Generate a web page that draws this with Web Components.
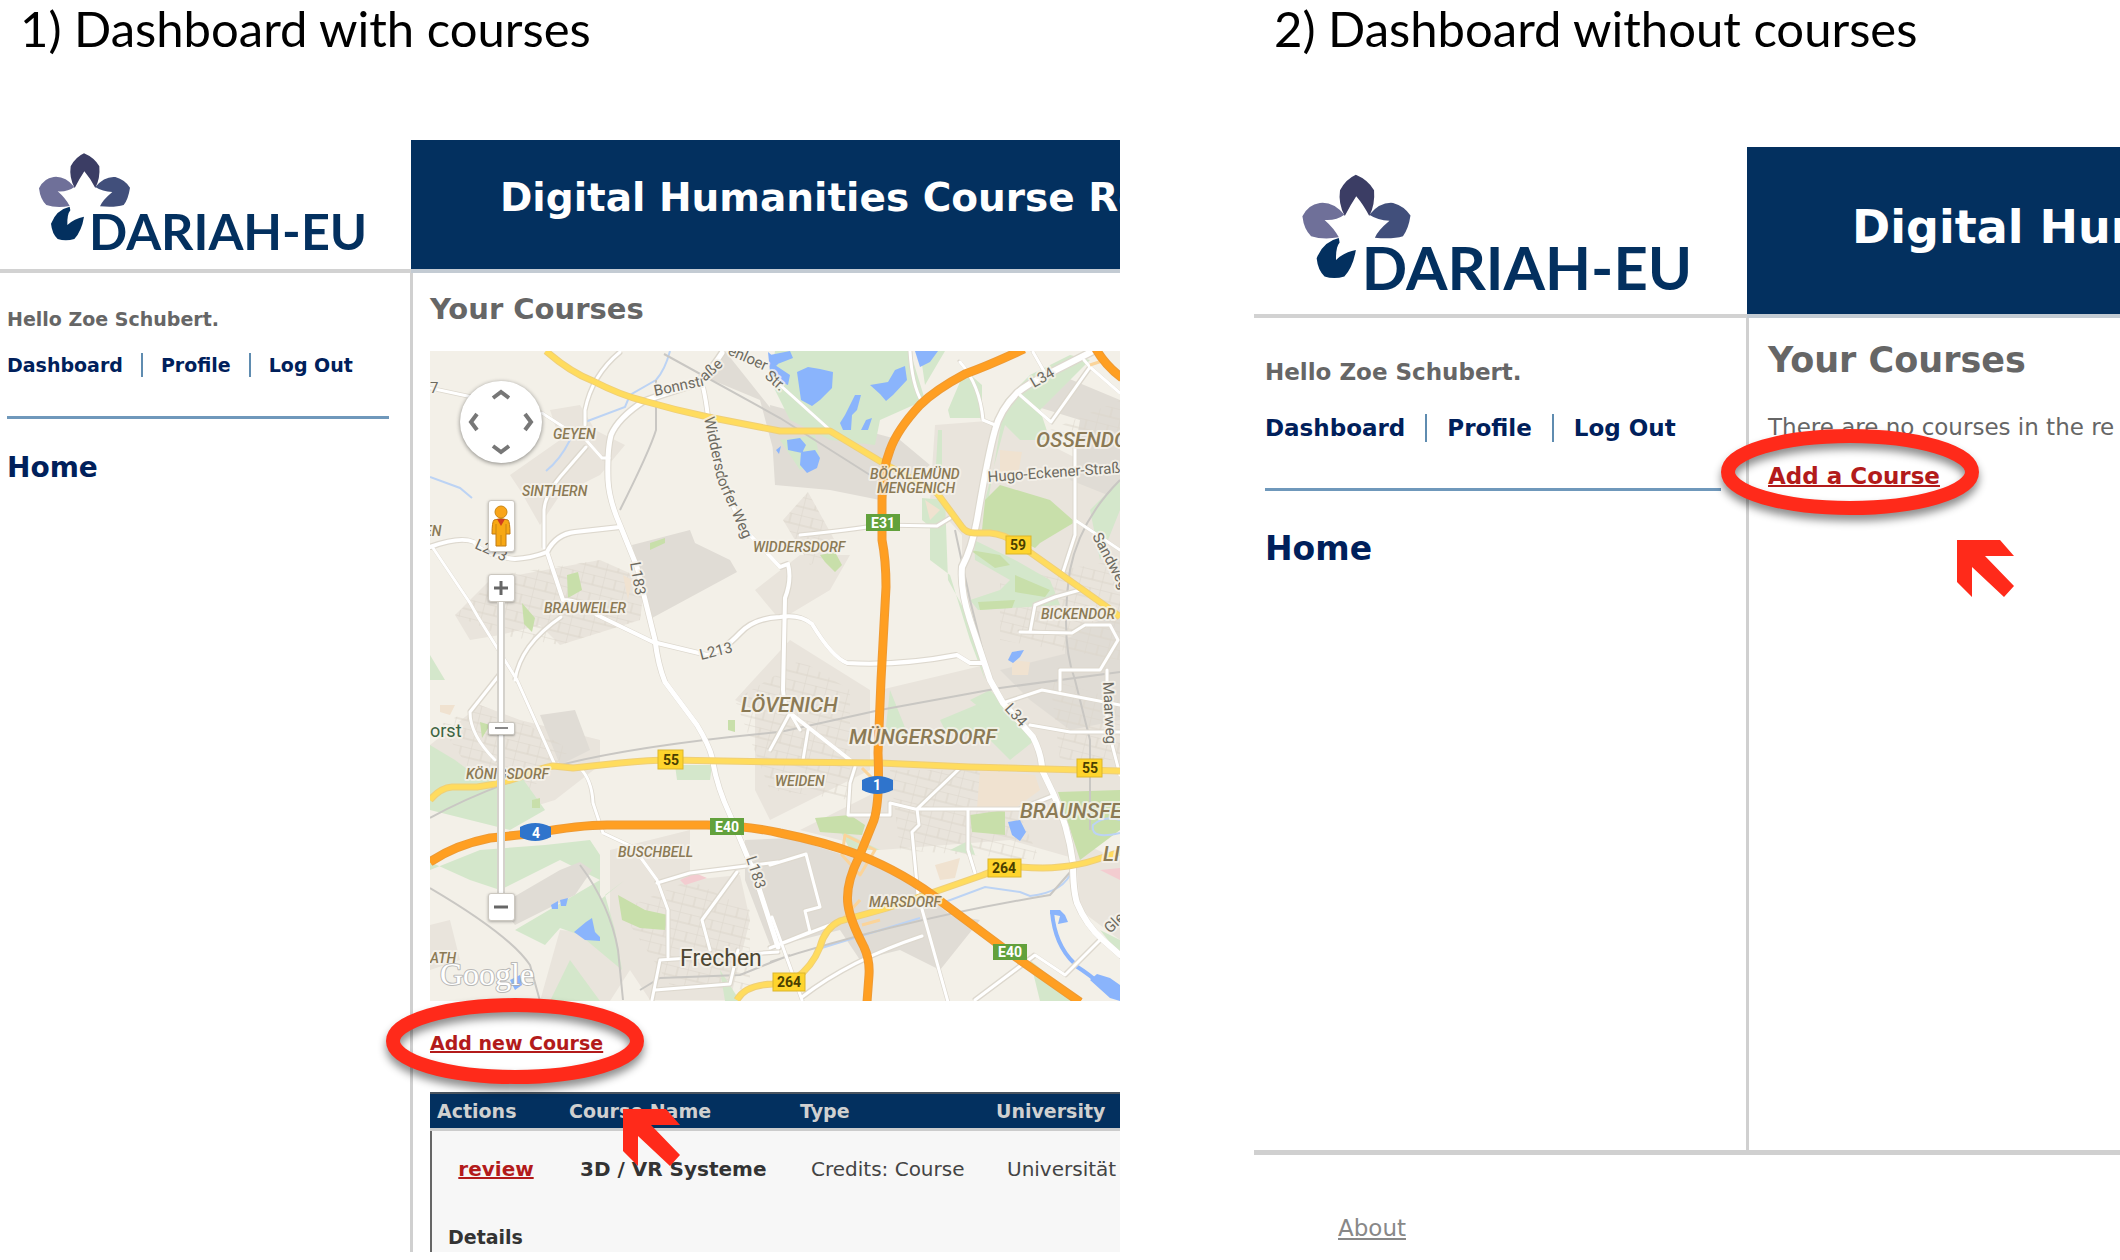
<!DOCTYPE html>
<html lang="en">
<head>
<meta charset="utf-8">
<title>Dashboard states</title>
<style>
  body { margin: 0; background: #fff; font-family: "DejaVu Sans", Verdana, sans-serif; }
</style>
</head>
<body>
<dashboard-board></dashboard-board>

<script>
const define = (name, html) => {
  const template = document.createElement('template');
  template.innerHTML = html;
  customElements.define(name, class extends HTMLElement {
    constructor() {
      super();
      this.attachShadow({ mode: 'open' }).append(template.content.cloneNode(true));
    }
  });
};

define('slide-caption', `
<style>
  :host { display: block; box-sizing: border-box; padding: 0 20px; overflow: hidden; }
  h1 { margin: 0; font: 400 49px/56px Lato, sans-serif; color: #000; white-space: nowrap; }
</style>
<h1><slot></slot></h1>`);

define('dariah-logo', `
<style>
  :host { display: block; }
  svg { display: block; width: 100%; }
  text { font: 700 151px Lato, sans-serif; fill: #03305f; }
</style>
<svg viewBox="110 60 990 310" role="img" aria-label="DARIAH-EU">
  <path fill="#3b3d64" d="M251 67Q282 80 297 106Q300 142 285 171Q270 142 252 121Q238 142 223 171Q206 140 211 106Q226 78 251 67Z"/>
  <path fill="#6f7099" d="M222 168Q194 134 160 138Q130 142 116 172Q120 206 138 222Q168 232 208 225Q196 202 172 181Q202 183 222 168Z"/>
  <path fill="#414f7b" d="M285 168Q312 135 345 138Q374 146 389 170Q384 204 370 222Q345 230 299 226Q306 208 336 183Q306 182 285 168Z"/>
  <path fill="#03305f" d="M208 227Q168 236 152 278Q155 308 172 324Q196 332 222 324Q244 300 251 257Q222 262 201 282Q200 250 210 238Z"/>
  <text x="266" y="357">DARIAH-EU</text>
</svg>`);

define('user-menu', `
<style>
  :host { display: block; color: #00205b; font-weight: 700; }
  p { margin: 0; color: #666; font-size: var(--menu-size); line-height: var(--menu-line); }
  nav { display: flex; margin-top: var(--nav-gap); font-size: var(--menu-size); line-height: var(--menu-line); white-space: nowrap; }
  a { color: inherit; text-decoration: none; }
  nav a + a { margin-left: var(--link-gap); padding-left: var(--link-gap); border-left: 2px solid #5f8cb0; }
  hr { height: 3px; margin: var(--rule-gap) 0 var(--home-gap); border: 0; background: #6f98bb; }
  .home { display: block; font-size: var(--home-size); line-height: 34px; }
</style>
<p>Hello Zoe Schubert.</p>
<nav><a href="#dashboard">Dashboard</a><a href="#profile">Profile</a><a href="#logout">Log Out</a></nav>
<hr>
<a class="home" href="#home">Home</a>`);

define('site-panel', `
<style>
  :host { display: grid; grid-template: var(--head) 1fr / var(--side) minmax(0, 1fr); overflow: hidden; }
  .logo { border-bottom: 4px solid #d2d2d2; padding: var(--logo-pad); }
  dariah-logo { width: var(--logo-width); }
  .banner { margin-left: -2px; background: #03305f; border-bottom: 4px solid #c3cbd3; color: #fff; overflow: hidden; }
  h2 { margin: 0; padding: var(--title-pad); font-size: var(--title-size); line-height: 56px; white-space: nowrap; }
  aside { border-right: 3px solid #d0d0d0; padding: var(--side-pad); }
  main { min-width: 0; padding: var(--main-pad); }
  h3 { margin: 0; font-size: var(--heading-size); line-height: var(--heading-line); color: #666; white-space: nowrap; }
</style>
<div class="logo"><dariah-logo></dariah-logo></div>
<div class="banner"><h2><slot name="title"></slot></h2></div>
<aside><user-menu></user-menu></aside>
<main><h3>Your Courses</h3><slot></slot></main>`);

define('marked-link', `
<style>
  :host { display: block; position: relative; width: max-content; font-weight: 700; }
  a { color: #b31b1b; text-decoration: underline; text-decoration-thickness: 2px; white-space: nowrap; }
  svg { position: absolute; overflow: visible; pointer-events: none; z-index: 2; }
  .ring { width: 258px; height: 86px; left: var(--ring-left); top: -33px; filter: drop-shadow(0 6px 4px rgba(0,0,0,.45)); }
  .arrow { width: 58px; height: 58px; left: var(--arrow-left); top: 78px; }
</style>
<a href="#add"><slot></slot></a>
<svg class="ring" viewBox="0 0 258 86" aria-hidden="true"><ellipse cx="129" cy="43" rx="122" ry="36" fill="none" stroke="#ff2a1a" stroke-width="14"/></svg>
<svg class="arrow" viewBox="0 0 58 58" aria-hidden="true"><path fill="#ff2a1a" d="M0 0H43L57 16H28L57 46L47 57L15 27V57L0 42Z"/></svg>`);

define('course-table', `
<style>
  :host { display: block; overflow: hidden; }
  table { width: 100%; table-layout: fixed; border-collapse: separate; border-spacing: 0; font-size: 20px; line-height: 24px; color: #444; white-space: nowrap; background: #f7f7f7; }
  th { background: #03305f; color: #d0d0d0; text-align: left; font-size: 19px; padding: 5px 7px; border-top: 2px solid #4b5560; border-bottom: 3px solid #ccc; }
  td { padding: 26px 0 34px 18px; }
  td:first-child { box-shadow: inset 2px 0 #666; }
  .act { padding-left: 0; text-align: center; }
  .more td { padding: 10px 0 3px 18px; font-size: 19px; }
  b { color: #333; }
  a { color: #b31b1b; font-weight: 700; text-decoration-thickness: 2px; }
</style>
<table>
  <colgroup><col style="width:132px"><col style="width:231px"><col style="width:196px"><col></colgroup>
  <thead><tr><th>Actions</th><th>Course Name</th><th>Type</th><th>University</th></tr></thead>
  <tbody>
    <tr><td class="act"><a href="#review">review</a></td><td><b>3D / VR Systeme</b></td><td>Credits: Course</td><td>Universität</td></tr>
    <tr class="more"><td colspan="4"><b>Details</b></td></tr>
  </tbody>
</table>`);

define('map-controls', `
<style>
  :host { display: flex; flex-direction: column; align-items: center; width: 82px; }
  button { box-sizing: border-box; width: 27px; height: 28px; padding: 0; border: 1px solid #ccc8c0; border-radius: 3px; background: #fff; box-shadow: 0 1px 3px rgba(0,0,0,.3); display: grid; place-items: center; }
  button svg { display: block; }
  .pan { width: 82px; height: 82px; border-radius: 50%; background: #fff; box-shadow: 0 1px 4px rgba(0,0,0,.45); display: grid; grid-template: repeat(3, 1fr) / repeat(3, 1fr); place-items: center; }
  .pan button { width: 24px; height: 24px; border: 0; background: none; box-shadow: none; }
  .n { grid-area: 1/2; } .w { grid-area: 2/1; } .e { grid-area: 2/3; } .s { grid-area: 3/2; }
  .n svg { transform: rotate(90deg); } .e svg { transform: rotate(180deg); } .s svg { transform: rotate(-90deg); }
  .peg { height: 52px; margin: 37px 0 22px; }
  input { appearance: none; writing-mode: vertical-lr; width: 28px; height: 291px; margin: 0; background: linear-gradient(90deg, transparent 10px, #d5d2cc 10px 12px, #fff 12px 16px, #d5d2cc 16px 18px, transparent 18px); }
  input::-webkit-slider-thumb { appearance: none; box-sizing: border-box; width: 27px; height: 13px; border: 1px solid #c8c5be; border-radius: 2px; background: linear-gradient(#888, #888) center / 13px 2px no-repeat #fff; box-shadow: 0 1px 2px rgba(0,0,0,.3); }
</style>
<div class="pan">
  <button class="n" aria-label="Pan up"><svg width="12" height="20" viewBox="0 0 12 20"><path d="M9 2L3 10L9 18" fill="none" stroke="#777" stroke-width="4"/></svg></button>
  <button class="w" aria-label="Pan left"><svg width="12" height="20" viewBox="0 0 12 20"><path d="M9 2L3 10L9 18" fill="none" stroke="#777" stroke-width="4"/></svg></button>
  <button class="e" aria-label="Pan right"><svg width="12" height="20" viewBox="0 0 12 20"><path d="M9 2L3 10L9 18" fill="none" stroke="#777" stroke-width="4"/></svg></button>
  <button class="s" aria-label="Pan down"><svg width="12" height="20" viewBox="0 0 12 20"><path d="M9 2L3 10L9 18" fill="none" stroke="#777" stroke-width="4"/></svg></button>
</div>
<button class="peg" aria-label="Street View"><svg width="20" height="44" viewBox="0 0 20 44"><path d="M3 16Q10 13 17 16Q19 18 19 30H15V42H5V30H1Q1 18 3 16Z" fill="#f7a814" stroke="#c07a14"/><path d="M6 15H14L10 22Z" fill="#d03c20"/><circle cx="10" cy="8" r="6" fill="#f9a51a" stroke="#c98612"/><path d="M5 30V20M15 30V20M10 31V41" stroke="#c98612"/></svg></button>
<button aria-label="Zoom in"><svg width="14" height="14" viewBox="0 0 14 14"><path d="M7 0V14M0 7H14" stroke="#666" stroke-width="3"/></svg></button>
<input type="range" min="0" max="100" value="43" aria-label="Zoom level">
<button aria-label="Zoom out"><svg width="14" height="14" viewBox="0 0 14 14"><path d="M0 7H14" stroke="#666" stroke-width="3"/></svg></button>`);

define('course-map', `
<style>
  :host { display: block; position: relative; overflow: hidden; background: #f3f0e8; }
  .map { display: block; width: 100%; height: 650px; }
  map-controls { position: absolute; left: 30px; top: 30px; }
  text { font-family: Roboto, sans-serif; paint-order: stroke; stroke: #f6f3ec; stroke-width: 4px; stroke-opacity: .8; stroke-linejoin: round; }
  .town { font-style: italic; font-size: 14px; fill: #8b7a55; font-weight: 500; }
  .big { font-size: 21px; }
  .road { font-size: 15px; fill: #6d6a60; }
  .city { font-size: 23px; fill: #4c4633; }
  .badge text { stroke: none; font-size: 14px; font-weight: 700; text-anchor: middle; fill: #4a3f00; }
  .badge .w { fill: #fff; }
</style>
<svg class="map" viewBox="430 351 690 650" preserveAspectRatio="xMinYMin slice" role="img" aria-label="Map of courses west of Cologne">
  <defs>
    <pattern id="streets" width="22" height="18" patternUnits="userSpaceOnUse" patternTransform="rotate(14)"><path d="M0 0H22M0 0V18M12 0V10M0 10H22" stroke="#dcd6cb" fill="none"/></pattern>
    <g id="white">
      <path d="M722 353Q706 378 690 386Q664 394 644 401Q618 418 611 435Q607 450 608 480Q609 500 620 525L637 567L655 640Q658 665 665 682Q682 705 697 725Q709 745 712 757Q716 785 730 815L753 870L778 947" stroke-width="5"/>
      <path d="M703 387Q706 400 708 417L720 473Q732 510 748 533L780 567L788 564Q792 580 785 598L783 690Q784 707 790 713L850 760" stroke-width="4"/>
      <path d="M430 547Q460 536 474 542Q484 556 515 559Q532 558 547 552Q556 534 575 532L620 527M547 552L563 600Q582 600 597 615L653 642L707 655Q722 652 740 633Q754 618 780 617Q800 614 812 624Q832 657 847 663Q900 666 957 655L970 663H983" stroke-width="4"/>
      <path d="M433 548L470 603L478 617L517 680L555 765L580 768Q592 780 593 803L603 833L633 847L657 880L668 910V957" stroke-width="3"/>
      <path d="M1093 351L1050 373Q1026 385 1017 393Q1000 410 995 430Q988 455 977 520Q972 548 962 567Q960 590 970 620L990 680L1003 703L1033 737Q1042 755 1042 770L1053 793Q1068 825 1073 863Q1073 890 1077 903Q1086 925 1103 940L1120 955" stroke-width="6"/>
      <path d="M910 351Q912 385 922 402M960 362Q980 385 983 420L995 425M1033 352L1045 373M1020 395L1051 422L1090 367L1084 360M1090 367L1120 393M770 376L830 430M1075 440V535L1063 572M1075 520L1120 550" stroke-width="3"/>
      <path d="M620 352Q592 375 585 410V425M542 413L565 428M586 440L602 458H609M586 447L560 477Q545 495 544 510V548M430 388L472 397M561 617Q520 645 515 680M500 674L470 712Q470 735 495 760" stroke-width="3"/>
      <path d="M1003 703L1042 690L1120 705M1030 725L1070 732H1120M1107 670V725L1120 775M916 809H1020L1055 795M960 768L917 809L919 825L912 832L918 895L948 1002M968 810V850L975 873M855 767L850 783L848 815H890V803L915 809" stroke-width="3"/>
      <path d="M657 883L690 873L778 862M737 872L702 920L710 950M652 1000L660 960L778 952M655 990L730 984L738 950M770 865L806 854L820 907L805 911L810 932L770 948L830 925M772 917L802 1000M802 997Q850 960 922 936M975 1000L1035 955L1050 965L1065 975L1100 940" stroke-width="3"/>
      <path d="M800 730L790 713L770 750M808 730L803 760M1020 632L1072 633L1085 625H1110L1118 640L1100 670H1060V690M1035 605L1030 632M1035 605L1055 597L1080 590M800 535Q850 530 880 525L937 526L950 518" stroke-width="3"/>
    </g>
    <g id="yellow"><path d="M546 351Q570 372 593 381Q620 395 644 401Q675 410 708 417L780 431H830L883 463L937 493L962 527Q966 533 975 533H990Q1003 534 1017 543L1107 607L1120 617"/><path d="M430 800Q440 788 452 787H477Q500 784 520 777Q540 768 553 766L573 768L620 763Q650 760 670 760L780 762L880 763L970 767L1120 771"/><path d="M737 1000Q745 985 773 984L795 979Q812 967 820 947Q825 928 840 921Q870 913 887 908L937 891L983 875Q1000 867 1020 867Q1045 869 1060 867Q1080 865 1095 860L1120 852"/></g>
    <g id="orange"><path d="M1024 349Q990 365 965 374Q935 390 920 405Q897 430 890 450Q882 470 882 500V540Q886 560 886 587L881 680L878 753Q880 800 874 820L859 857Q845 885 848 905Q850 920 864 947Q870 960 869 975L867 1002"/><path d="M430 862Q455 845 490 838Q520 835 535 833Q580 825 607 825H707Q750 826 780 833Q825 842 859 855Q905 873 943 903L1010 953L1080 1002"/><path d="M1096 349Q1105 365 1122 378"/></g>
  </defs>
  <g fill="#e9e4dc">
    <path d="M510 475L560 440L550 410L580 405L595 430L625 445L600 475L560 495L540 525L520 490ZM455 615L490 580L600 560L645 580L640 620L560 645L540 625L500 635L470 640ZM755 590L800 555L850 555L830 590L780 620ZM783 520L808 492L840 550L810 565Z"/>
    <path d="M935 425L1000 420L1120 480V620L1070 670H985L962 590V535L930 500ZM430 745L480 705L520 720L600 740V765L555 800L490 820L470 800L430 795ZM735 700L790 640L870 690V770L770 820L755 790V710ZM880 690L985 665L1120 680V800L1080 860L1010 840L880 850L800 830L880 790Z"/>
    <path d="M610 850L690 830L690 880L740 875L750 920L730 1000H650L610 940ZM430 925L450 920L460 960L430 970ZM1075 840L1120 860V940L1080 910ZM560 930L620 935L630 970L610 1001H540Z"/>
  </g>
  <g fill="#e0dcd5">
    <path d="M632 545L690 530L695 543L730 560L737 572L652 618L640 580ZM725 351L780 420V475L760 400L700 375ZM770 405L900 440L930 465L880 500L830 490L775 485ZM1015 400L1060 375L1120 400V500L1070 480L1080 420ZM745 840L790 838L860 860L910 880L950 915L980 920L940 970L900 950L860 960L840 930L800 940L770 945L745 880ZM1000 670L1120 640V720L1070 730L1030 700ZM540 715L575 710L590 750L560 765ZM1100 620L1120 610V660L1065 660V640Z"/>
  </g>
  <path fill="url(#streets)" d="M455 615L500 575L600 560L645 580L640 620L560 645L500 635ZM783 520L808 492L840 550L810 565ZM1000 580L1120 560V660L1000 640ZM890 770H1000L1040 860L900 850ZM620 910L690 880L750 910V990L670 985ZM440 725L480 705L520 720L570 750L530 790L470 770ZM735 700L800 660L850 690V800L770 790ZM1050 430L1120 400V440H1070ZM1050 680L1120 700V760H1060Z"/>
  <g fill="#d4e7cb">
    <path d="M430 655L445 680H430ZM430 745L455 760L475 775L520 775L545 810L510 830L430 810ZM430 870L480 850L545 845L590 840L600 855L600 900L625 880L605 895L615 930L622 970L580 935L560 928L545 945L515 930L600 880L560 860L500 890L470 880L430 862Z"/>
    <path d="M775 351H850L910 351L925 400L880 420L875 445L830 440L790 420L770 380ZM920 351H945L925 385ZM948 410L965 370L982 385L982 418L950 418ZM1005 400L1030 375L1070 355L1090 360L1040 410L1050 440L1020 440L1005 425L985 500V520ZM780 440L815 435L820 460L800 470ZM1090 510L1120 480V510L1100 560ZM930 500L945 498L948 580L970 620L985 680L970 640L950 575L930 560ZM940 720L1000 695L1035 740L1010 760L990 740L945 730ZM675 765H712L710 780H677ZM970 840L950 850L975 855ZM1030 960L1080 1001H1040ZM840 830L880 850L850 850ZM570 960L600 1001H550ZM720 970L740 1001H725ZM1100 930L1120 940V955ZM890 690L910 740L885 735Z"/>
    <path d="M922 498L945 500L940 535L922 520ZM974 540L1015 560L1050 580L1060 605L978 610L970 600L1000 590L1010 580L975 560ZM938 430L942 430L942 470L936 465ZM970 700L990 690L1000 700L985 712Z"/>
  </g>
  <path fill="#e0dcd5" d="M515 925L500 905L560 870L580 862L592 870L575 895Z"/>
  <g fill="#c8dfaa">
    <path d="M1000 485L1050 500L1075 522L1040 543L1035 548L1010 535L982 530L985 500ZM970 550L1000 555L1010 565L995 568ZM1015 575L1050 590L1045 597L1015 592ZM978 602L1015 600L1012 608L980 610ZM567 575L578 572L582 590L568 598ZM522 603L535 618L532 632L524 624ZM815 818L850 815L865 825L862 835L820 832ZM1058 792L1120 790V830L1080 860ZM618 895L645 910L668 915L665 930L640 928L622 920ZM970 815L1005 810V835L972 832ZM480 722L490 725L482 738ZM728 720L735 720V732L728 730ZM532 800L540 798V808L532 808ZM820 555L835 552L842 565L835 572L825 562ZM650 543L665 538V543L650 550Z"/>
  </g>
  <g fill="#f0e2d0"><path d="M980 770L1035 775L1040 790L1010 812L977 808ZM1000 450L1022 452L1018 475L1000 480ZM935 865L960 858L955 878L940 880ZM440 705L455 705L450 715L440 712ZM623 575L632 580L628 600ZM925 500L940 510L930 520ZM1012 660L1030 662L1028 675H1012Z"/></g>
  <path fill="#f3ccd0" d="M680 880L695 873L707 878L685 885ZM1100 870L1120 868V880Z"/>
  <path fill="#8ab4fc" d="M770 355L790 351L793 358L775 365L790 375L788 385L770 378ZM797 372L808 367L820 369L833 372L832 388L820 400L812 406L801 400ZM870 385L888 382L895 370L905 366L907 380L893 395L886 401L880 394ZM855 395L861 395L857 410L852 415L851 430L843 430L840 423L845 415ZM866 420L872 418L868 430L861 430ZM787 440L800 438L806 445L802 453L788 450ZM801 452L815 450L820 458L817 468L807 473L800 465ZM915 351H938L930 362L920 367ZM768 352L780 362L770 372ZM1008 660L1012 652L1024 650L1020 657L1013 663ZM1008 822L1020 820L1026 832L1020 841L1012 835ZM574 932L586 922L592 918L595 932L600 937V941L585 940ZM551 905L558 901L558 909H552ZM560 900L568 898L566 906H561ZM510 980L520 975L522 985L515 990ZM1090 980L1097 974L1110 978L1120 985V1001L1110 998ZM1050 910L1060 910L1065 915L1068 922L1058 924L1060 916L1050 914ZM776 450L781 446L779 454Z"/>
  <path fill="none" stroke="#8ab4fc" stroke-width="4" d="M1052 912Q1055 945 1074 963M1076 966Q1090 975 1100 984"/>
  <path fill="none" stroke="#bcd3f4" stroke-width="2" d="M670 351Q665 370 656 380L630 395L625 407L585 422M430 477L460 488L472 498M570 440Q560 460 546 471M815 950L920 918M945 902L985 887L1020 892L1030 896Q1065 892 1072 870M1120 833Q1090 840 1093 825Q1105 815 1120 820"/>
  <path fill="none" stroke="#c9c7c3" stroke-width="2" d="M656 380V430Q650 450 620 510M664 354L780 418L870 475M430 818Q480 790 560 765Q640 745 780 732L880 710L1000 688L1120 672M430 888Q510 935 530 965L540 1001M580 865Q610 905 618 950L623 1000M770 962Q900 920 1050 895L1072 870M1120 480Q1080 520 1070 570Q1060 640 1075 680L1090 740V830M955 530L970 600L985 660M640 990L660 978L740 975L790 955"/>
  <g fill="none" stroke-linecap="round" stroke-linejoin="round">
    <g stroke="#ddd8ce"><use href="#white" transform="translate(1 1)"/><use href="#white" transform="translate(-1 -1)"/></g>
    <use href="#white" stroke="#fff"/>
  </g>
  <g fill="none" stroke-linejoin="round">
    <path d="M845 835L875 850L860 875L842 855ZM840 922L860 900M880 920L862 925M862 768L872 778M1090 365L1105 360" stroke="#fbd49a" stroke-width="3"/>
    <use href="#yellow" stroke="#efcf78" stroke-width="7"/><use href="#yellow" stroke="#ffdc5e" stroke-width="5"/>
    <use href="#orange" stroke="#ee9a34" stroke-width="9"/><use href="#orange" stroke="#ff9f22" stroke-width="7"/>
  </g>
  <g class="town">
    <text x="553" y="439">GEYEN</text><text x="522" y="496">SINTHERN</text><text x="424" y="536">EN</text>
    <text x="544" y="613">BRAUWEILER</text><text x="753" y="552">WIDDERSDORF</text><text x="870" y="479">BÖCKLEMÜND</text><text x="877" y="493">MENGENICH</text>
    <text x="1041" y="619">BICKENDOR</text><text x="466" y="779">KÖNIGSDORF</text><text x="775" y="786">WEIDEN</text><text x="618" y="857">BUSCHBELL</text><text x="869" y="907">MARSDORF</text><text x="430" y="963">ATH</text>
    <text class="big" x="1036" y="447">OSSENDO</text><text class="big" x="741" y="712">LÖVENICH</text><text class="big" x="849" y="744">MÜNGERSDORF</text><text class="big" x="1020" y="818">BRAUNSFE</text><text class="big" x="1103" y="861">LI</text>
  </g>
  <g class="road">
    <text transform="translate(655 396) rotate(-12)">Bonnstr</text><text transform="translate(705 382) rotate(-42)">aße</text>
    <text transform="translate(727 354) rotate(24)">enloer</text><text transform="translate(764 377) rotate(42)">Str.</text>
    <text transform="translate(704 418) rotate(78)">Widdersd</text><text transform="translate(717 480) rotate(66)">orfer Weg</text>
    <text transform="translate(474 548) rotate(24)">L213</text><text transform="translate(630 563) rotate(80)">L183</text><text transform="translate(701 660) rotate(-14)">L213</text><text transform="translate(746 858) rotate(72)">L183</text>
    <text transform="translate(1034 388) rotate(-30)">L34</text><text transform="translate(1004 709) rotate(48)">L34</text>
    <text transform="translate(988 482) rotate(-4)">Hugo-Eckener-Straß</text><text transform="translate(1092 536) rotate(62)">Sandweg</text><text transform="translate(1103 682) rotate(87)">Maarweg</text><text transform="translate(1110 934) rotate(-44)">Gle</text><text x="430" y="393">7</text>
  </g>
  <text x="430" y="737" font-size="18" fill="#3c6442">orst</text>
  <text class="city" x="680" y="966">Frechen</text>
  <g class="badge">
    <g fill="#62a13c"><rect x="866" y="514" width="34" height="17"/><rect x="710" y="818" width="34" height="17"/><rect x="993" y="944" width="34" height="16"/></g>
    <g fill="#fed42c" stroke="#dcb62c"><rect x="1006" y="536" width="25" height="18"/><rect x="658" y="750" width="25" height="19"/><rect x="1077" y="759" width="25" height="18"/><rect x="988" y="859" width="33" height="18"/><rect x="773" y="973" width="32" height="18"/></g>
    <path fill="#2f74cc" d="M520 827Q535 819 551 827V837Q535 845 520 837ZM862 780Q877 772 893 780V790Q877 798 862 790Z"/>
    <text class="w" x="883" y="528">E31</text><text class="w" x="727" y="832">E40</text><text class="w" x="1010" y="957">E40</text><text class="w" x="536" y="838">4</text><text class="w" x="877" y="790">1</text>
    <text x="1018" y="550">59</text><text x="671" y="765">55</text><text x="1090" y="773">55</text><text x="1004" y="873">264</text><text x="789" y="987">264</text>
  </g>
  <text x="440" y="985" font-size="32" style="font-family:'Liberation Serif',serif;stroke:#aaa;stroke-width:2px" fill="#fff">Google</text>
</svg>
<map-controls></map-controls>`);

define('dashboard-board', `
<style>
  :host { display: grid; grid-template-columns: 1120fr 866fr; gap: 134px; align-items: start; }
  section { min-width: 0; }
  .first slide-caption { height: 140px; }
  .second slide-caption { height: 147px; }
  .first site-panel {
    --side: 413px; --head: 133px; --logo-pad: 11px 0 0 37px; --logo-width: 330px;
    --title-size: 39px; --title-pad: 30px 0 0 89px; --side-pad: 34px 21px 0 7px; --main-pad: 18px 0 0 17px;
    --menu-size: 19px; --menu-line: 24px; --nav-gap: 22px; --link-gap: 18px; --rule-gap: 39px; --home-gap: 32px; --home-size: 28px;
    --heading-size: 29px; --heading-line: 36px;
  }
  .second site-panel {
    --side: 495px; --head: 171px; --logo-pad: 25px 0 0 46px; --logo-width: 392px;
    --title-size: 46px; --title-pad: 52px 0 0 105px; --side-pad: 40px 25px 0 11px; --main-pad: 22px 0 0 19px;
    --menu-size: 23px; --menu-line: 28px; --nav-gap: 28px; --link-gap: 20px; --rule-gap: 46px; --home-gap: 41px; --home-size: 33px;
    --heading-size: 35px; --heading-line: 40px;
    min-height: 1003px;
  }
  course-map { margin: 24px 0 30px; }
  .first marked-link { font-size: 19px; line-height: 24px; --ring-left: -44px; --arrow-left: 193px; margin-bottom: 37px; }
  .second marked-link { font-size: 23px; line-height: 28px; --ring-left: -47px; --arrow-left: 189px; }
  .empty { margin: 33px 0 21px; font-size: 23px; line-height: 28px; color: #666; white-space: nowrap; }
  footer { border-top: 5px solid #d0d0d0; padding: 59px 84px 0; font-size: 23px; line-height: 28px; }
  footer a { color: #888; }
</style>
<section class="first">
  <slide-caption>1) Dashboard with courses</slide-caption>
  <site-panel>
    <span slot="title">Digital Humanities Course Re</span>
    <course-map></course-map>
    <marked-link>Add new Course</marked-link>
    <course-table></course-table>
  </site-panel>
</section>
<section class="second">
  <slide-caption>2) Dashboard without courses</slide-caption>
  <site-panel>
    <span slot="title">Digital Hum</span>
    <p class="empty">There are no courses in the re</p>
    <marked-link>Add a Course</marked-link>
  </site-panel>
  <footer><a href="#about">About</a></footer>
</section>`);
</script>
</body>
</html>
